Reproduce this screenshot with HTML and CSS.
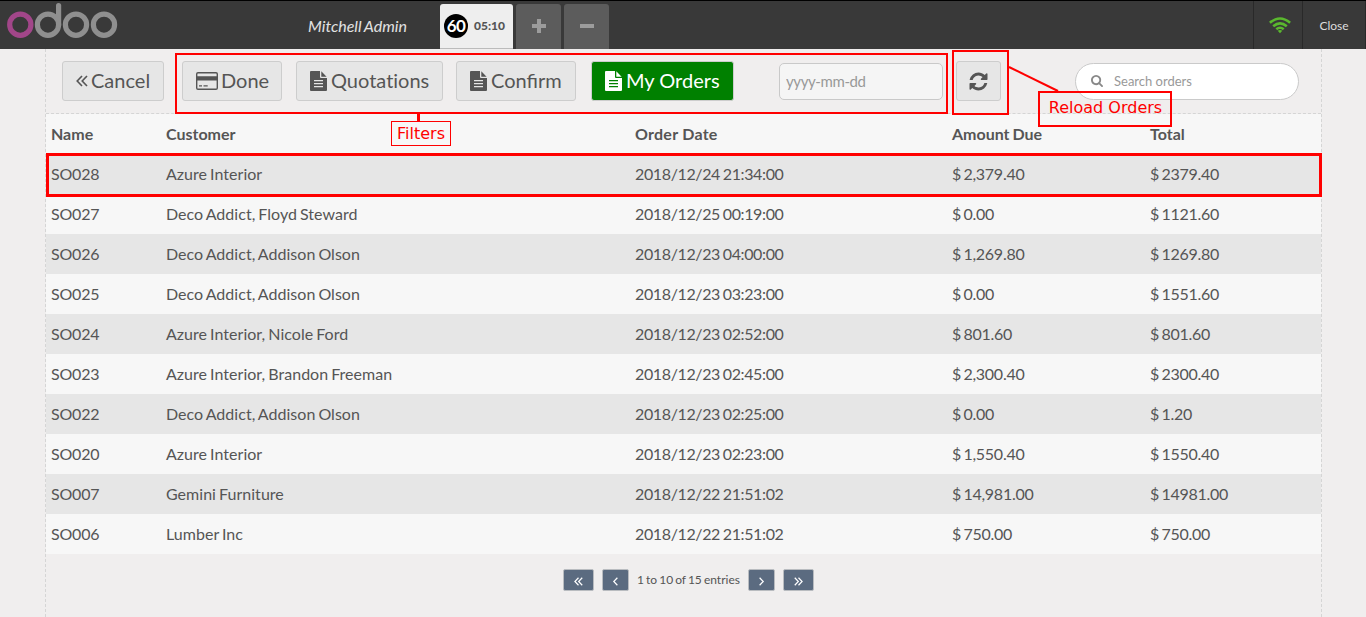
FILE: index.html
```html
<!DOCTYPE html>
<html lang="en">
<head>
<meta charset="utf-8">
<title>Orders</title>
<link rel="stylesheet" href="styles.css">
</head>
<body>
<svg class="defs" aria-hidden="true">
  <symbol id="file" viewBox="0 0 17 20">
    <path fill-rule="evenodd" d="M1 0H10V6Q10 7 11 7H17V19Q17 20 16 20H1Q0 20 0 19V1Q0 0 1 0ZM4 9V10.2H13V9ZM4 12V13.2H13V12ZM4 15V16.2H13V15ZM11.3 0.3L16.6 5.7H11.3Z"/>
  </symbol>
  <symbol id="double-left" viewBox="0 0 12 12"><path class="line" d="M6 1L1.2 6L6 11M11 1L6.2 6L11 11"/></symbol>
  <symbol id="double-right" viewBox="0 0 12 12"><path class="line" d="M1 1L5.8 6L1 11M6 1L10.8 6L6 11"/></symbol>
  <symbol id="left" viewBox="0 0 12 12"><path class="line" d="M8.5 1L3.7 6L8.5 11"/></symbol>
  <symbol id="right" viewBox="0 0 12 12"><path class="line" d="M3.5 1L8.3 6L3.5 11"/></symbol>
</svg>
<div class="page">
  <header class="topbar">
    <svg class="logo" width="112" height="38" viewBox="0 0 112 38" fill="none" stroke="#8f8f8f" stroke-width="5.2">
      <circle cx="14.3" cy="21.7" r="10.6" stroke="#a24689"/>
      <circle cx="42" cy="21.7" r="10.6"/>
      <circle cx="70" cy="21.7" r="10.6"/>
      <circle cx="98" cy="21.7" r="10.6"/>
      <path d="M52.6 22V2.6" stroke-linecap="round"/>
    </svg>
    <span class="username">Mitchell Admin</span>
    <nav class="tabs">
      <div class="tab active"><span class="number">60</span><span class="time">05:10</span></div>
      <div class="tab"><svg width="14" height="14"><path d="M5 0h4v5h5v4H9v5H5V9H0V5h5z"/></svg></div>
      <div class="tab"><svg width="14" height="14"><path d="M0 5h14v4H0z"/></svg></div>
    </nav>
    <div class="status">
      <svg width="22" height="17" viewBox="0 0 22 17" fill="none" stroke="#5ab82e" stroke-width="2.6">
        <path d="M0.9 5.7Q11 -2.7 21.1 5.7"/>
        <path d="M4.2 9.2Q11 3.4 17.8 9.2"/>
        <path d="M7.3 12.3Q11 9.2 14.7 12.3"/>
        <path d="M8.7 13.8Q11 12.2 13.3 13.8L11 16.2Z" fill="#5ab82e" stroke="none"/>
      </svg>
    </div>
    <div class="close">Close</div>
  </header>

  <main class="screen">
    <div class="toolbar">
      <button class="button cancel"><svg class="angle" width="12" height="12"><use href="#double-left"/></svg>Cancel</button>
      <button class="button done">
        <svg class="card" width="22" height="18" viewBox="0 0 22 18"><path fill-rule="evenodd" d="M2 0H20Q22 0 22 2V16Q22 18 20 18H2Q0 18 0 16V2Q0 0 2 0ZM2 1.4Q1.4 1.4 1.4 2V4.3H20.6V2Q20.6 1.4 20 1.4ZM1.4 8.6V16Q1.4 16.6 2 16.6H20Q20.6 16.6 20.6 16V8.6ZM3 13.3H6V14.6H3ZM7.5 13.3H11.7V14.6H7.5Z"/></svg>Done</button>
      <button class="button quotations"><svg class="file" width="17" height="20"><use href="#file"/></svg>Quotations</button>
      <button class="button confirm"><svg class="file" width="17" height="20"><use href="#file"/></svg>Confirm</button>
      <button class="button mine"><svg class="file" width="17" height="20"><use href="#file"/></svg>My Orders</button>
      <input class="date" type="text" placeholder="yyyy-mm-dd">
      <button class="button reload"><svg width="21" height="21" viewBox="0 0 1792 1792"><path d="M1639 1056q0 5-1 7-64 268-268 434.5t-478 166.5q-146 0-282.5-55t-243.5-157l-129 129q-19 19-45 19t-45-19-19-45v-448q0-26 19-45t45-19h448q26 0 45 19t19 45-19 45l-137 137q71 66 161 102t187 36q134 0 250-65t186-179q11-17 53-117 8-23 30-23h192q13 0 22.5 9.5t9.5 22.5zm25-800v448q0 26-19 45t-45 19h-448q-26 0-45-19t-19-45 19-45l138-138q-148-137-349-137-134 0-250 65t-186 179q-11 17-53 117-8 23-30 23h-199q-13 0-22.5-9.5t-9.5-22.5v-7q65-268 270-434.5t480-166.5q146 0 284 55.5t245 156.5l130-129q19-19 45-19t45 19 19 45z"/></svg></button>
      <label class="search">
        <svg width="12" height="12" viewBox="64 128 1664 1664"><path d="M1216 832q0-185-131.5-316.5t-316.5-131.5-316.5 131.5-131.5 316.5 131.5 316.5 316.5 131.5 316.5-131.5 131.5-316.5zm512 832q0 52-38 90t-90 38q-54 0-90-38l-343-342q-179 124-399 124-143 0-273.5-55.5t-225-150-150-225-55.5-273.5 55.5-273.5 150-225 225-150 273.5-55.5 273.5 55.5 225 150 150 225 55.5 273.5q0 220-124 399l343 343q37 37 37 90z"/></svg>
        <input type="text" placeholder="Search orders">
      </label>
    </div>

    <table class="orders">
      <colgroup><col class="c-name"><col class="c-customer"><col class="c-date"><col class="c-due"><col></colgroup>
      <thead><tr><th>Name</th><th>Customer</th><th>Order Date</th><th>Amount Due</th><th>Total</th></tr></thead>
      <tbody>
        <tr><td>SO028</td><td>Azure Interior</td><td>2018/12/24 21:34:00</td><td>$ 2,379.40</td><td>$ 2379.40</td></tr>
        <tr><td>SO027</td><td>Deco Addict, Floyd Steward</td><td>2018/12/25 00:19:00</td><td>$ 0.00</td><td>$ 1121.60</td></tr>
        <tr><td>SO026</td><td>Deco Addict, Addison Olson</td><td>2018/12/23 04:00:00</td><td>$ 1,269.80</td><td>$ 1269.80</td></tr>
        <tr><td>SO025</td><td>Deco Addict, Addison Olson</td><td>2018/12/23 03:23:00</td><td>$ 0.00</td><td>$ 1551.60</td></tr>
        <tr><td>SO024</td><td>Azure Interior, Nicole Ford</td><td>2018/12/23 02:52:00</td><td>$ 801.60</td><td>$ 801.60</td></tr>
        <tr><td>SO023</td><td>Azure Interior, Brandon Freeman</td><td>2018/12/23 02:45:00</td><td>$ 2,300.40</td><td>$ 2300.40</td></tr>
        <tr><td>SO022</td><td>Deco Addict, Addison Olson</td><td>2018/12/23 02:25:00</td><td>$ 0.00</td><td>$ 1.20</td></tr>
        <tr><td>SO020</td><td>Azure Interior</td><td>2018/12/23 02:23:00</td><td>$ 1,550.40</td><td>$ 1550.40</td></tr>
        <tr><td>SO007</td><td>Gemini Furniture</td><td>2018/12/22 21:51:02</td><td>$ 14,981.00</td><td>$ 14981.00</td></tr>
        <tr><td>SO006</td><td>Lumber Inc</td><td>2018/12/22 21:51:02</td><td>$ 750.00</td><td>$ 750.00</td></tr>
      </tbody>
    </table>

    <div class="pager">
      <button class="wide"><svg width="9" height="9"><use href="#double-left"/></svg></button>
      <button><svg width="9" height="9"><use href="#left"/></svg></button>
      <span class="range">1 to 10 of 15 entries</span>
      <button><svg width="9" height="9"><use href="#right"/></svg></button>
      <button class="wide"><svg width="9" height="9"><use href="#double-right"/></svg></button>
    </div>
  </main>

  <div class="mark mark-filters"></div>
  <div class="mark mark-reload"></div>
  <div class="mark mark-row"></div>
  <div class="stem"></div>
  <svg class="leader" width="52" height="27"><path d="M1 1L50 25" stroke="#f00" stroke-width="2"/></svg>
  <div class="mark note note-filters">Filters</div>
  <div class="mark note note-reload">Reload Orders</div>
</div>
</body>
</html>
```
FILE: styles.css
```css
* { box-sizing: border-box; }
body { margin: 0; background: #f0eeee; color: #555; font-family: Lato, "Liberation Sans", sans-serif; }
svg { display: block; flex: none; }
button, input { font-family: inherit; color: inherit; margin: 0; }
.defs { position: absolute; width: 0; height: 0; }
.line { fill: none; stroke: currentColor; stroke-width: 1.6; }
.page { position: relative; width: 1366px; height: 617px; overflow: hidden; display: flex; flex-direction: column; }

.topbar { height: 49px; flex: none; display: flex; background: #393939; border-top: 1px solid #000; }
.logo { margin: 2px 0 0 6px; }
.username { width: 290px; text-align: right; font-size: 16px; font-style: italic; line-height: 49px; word-spacing: -1px; padding-right: 1px; color: #e2e2e2; }
.tabs { display: flex; gap: 3px; padding: 3px 0 0 32px; }
.tab { width: 45px; height: 45px; padding-bottom: 2px; display: flex; align-items: center; justify-content: center; background: #5c5c5c; border-radius: 3px 3px 0 0; fill: #9c9c9c; }
.tab.active { width: 73px; justify-content: flex-start; padding: 0 0 0 4px; background: #eee; border-bottom: 1px solid #bbb; }
.number { width: 24px; height: 24px; border-radius: 50%; background: #000; color: #fff; font-size: 17px; letter-spacing: -0.6px; font-weight: 700; line-height: 23px; text-align: center; }
.time { margin-left: 6px; padding-bottom: 2px; font-size: 12px; font-weight: 900; color: #555; }
.status { margin-left: auto; width: 49px; border-left: 1px solid #292929; display: flex; justify-content: center; padding: 16px 0 0 4px; }
.close { width: 64px; border-left: 1px solid #292929; border-right: 1px solid #292929; font-size: 12px; line-height: 49px; text-align: center; color: #ddd; }

.screen { flex: 1; width: 1277px; margin-left: 45px; border: dashed #d5d5d5; border-width: 0 1px; }
.toolbar { height: 65px; padding: 0 22px 0 16px; display: flex; align-items: center; border-bottom: 1px dashed #d5d5d5; }
.button { height: 40px; padding: 0 13px 2px; display: flex; align-items: center; background: #e6e6e6; border: 1px solid #cdcdcd; border-radius: 3px; font-size: 20px; white-space: nowrap; flex: none; fill: currentColor; }
.angle { margin: 2px 3px 0 0; }
.card { margin: 2px 3px 0 0; }
.file { margin: 2px 4px 0 0; }
.cancel { width: 102px; }
.done { width: 100px; margin-left: 18px; }
.quotations { width: 147px; margin-left: 14px; font-variant-ligatures: none; }
.confirm { width: 120px; margin-left: 13px; }
.mine { width: 143px; margin-left: 15px; background: #008000; color: #fff; }
.date { width: 164px; height: 37px; margin-left: 45px; padding: 0 6px; border: 1px solid #c9c9c9; border-radius: 5px; background: #f5f5f5; font-size: 15px; letter-spacing: -0.4px; }
.reload { width: 45px; margin-left: 13px; justify-content: center; padding: 0; }
.search { width: 224px; height: 37px; margin-left: auto; display: flex; align-items: center; padding-left: 15px; background: #fff; border: 1px solid #cacaca; border-radius: 19px; fill: #888; }
.search input { width: 180px; margin-left: 11px; padding: 0; border: 0; background: none; font-size: 13px; }
input::placeholder { color: #999; opacity: 1; }

.orders { width: 1275px; table-layout: fixed; border-collapse: collapse; font-size: 16px; background: #f7f7f7; }
.c-name { width: 115px; }
.c-customer { width: 469px; }
.c-date { width: 317px; }
.c-due { width: 198px; }
.orders tr { height: 40px; }
.orders th, .orders td { padding: 0 5px 2px; text-align: left; }
.orders th:nth-child(3) { letter-spacing: 0.25px; }
.orders th:nth-child(4) { word-spacing: -1px; }
.orders td:nth-child(1) { letter-spacing: -0.2px; }
.orders td:nth-child(2) { letter-spacing: 0.03px; word-spacing: -1.1px; }
.orders td:nth-child(3) { letter-spacing: -0.37px; word-spacing: -1px; }
.orders td:nth-child(n+4) { letter-spacing: -0.25px; word-spacing: -1.5px; }
.orders tbody tr:nth-child(odd) { background: #e6e6e6; }

.pager { margin: 15px 0 0 517px; display: flex; align-items: center; gap: 8px; }
.pager button { width: 27px; height: 22px; padding: 2px 0 0; display: flex; align-items: center; justify-content: center; background: #5b6b80; color: #fff; border: 1px solid #b9bcc0; border-radius: 2px; }
.pager .wide { width: 31px; }
.range { width: 103px; padding-bottom: 2px; font-size: 12px; word-spacing: -1px; white-space: nowrap; }

.mark { position: absolute; border: 2px solid #f00; }
.mark-filters { left: 175px; top: 53px; width: 773px; height: 61px; }
.mark-reload { left: 952px; top: 50px; width: 57px; height: 65px; }
.mark-row { left: 46px; top: 153px; width: 1276px; height: 44px; border-width: 3px; }
.stem { position: absolute; left: 417px; top: 113px; width: 3px; height: 8px; background: #f00; }
.leader { position: absolute; left: 1008px; top: 66px; }
.note { color: #f00; font-family: "DejaVu Sans", sans-serif; font-size: 16px; text-align: center; white-space: nowrap; }
.note-filters { left: 391px; top: 121px; width: 60px; height: 25px; border-width: 1px; line-height: 23px; }
.note-reload { left: 1038px; top: 91px; width: 134px; height: 36px; padding-left: 1px; line-height: 29px; }
```
